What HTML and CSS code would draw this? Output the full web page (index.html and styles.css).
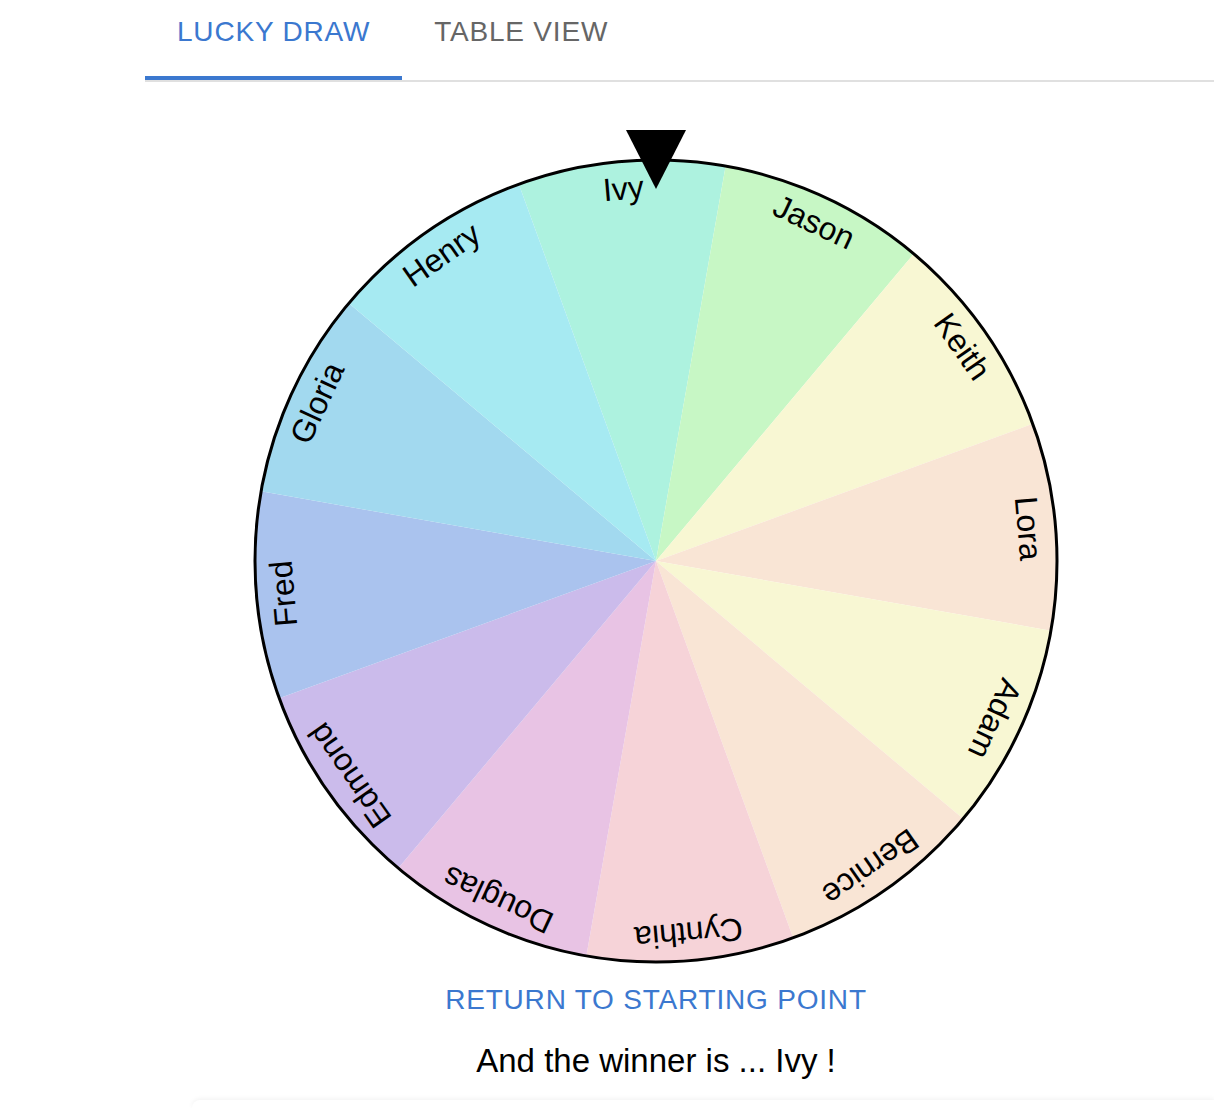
FILE: index.html
```html
<!DOCTYPE html>
<html lang="en">
<head>
<meta charset="utf-8">
<title>Lucky Draw</title>
<link rel="stylesheet" href="styles.css">
</head>
<body>
<div class="page">
  <nav class="tabs">
    <button class="tab active">LUCKY DRAW</button>
    <button class="tab">TABLE VIEW</button>
  </nav>
  <main class="content">
    <svg class="wheel" width="820" height="836" viewBox="0 0 820 836">
      <g class="slices">
        <path d="M410,431 L272.85,54.18 A401,401 0 0 1 479.63,36.09 Z" fill="#adf2df"/>
        <path d="M410,431 L479.63,36.09 A401,401 0 0 1 667.76,123.82 Z" fill="#c7f7c5"/>
        <path d="M410,431 L667.76,123.82 A401,401 0 0 1 786.82,293.85 Z" fill="#f8f7d3"/>
        <path d="M410,431 L786.82,293.85 A401,401 0 0 1 804.91,500.63 Z" fill="#f9e5d5"/>
        <path d="M410,431 L804.91,500.63 A401,401 0 0 1 717.18,688.76 Z" fill="#f8f7d3"/>
        <path d="M410,431 L717.18,688.76 A401,401 0 0 1 547.15,807.82 Z" fill="#f9e5d5"/>
        <path d="M410,431 L547.15,807.82 A401,401 0 0 1 340.37,825.91 Z" fill="#f6d3d8"/>
        <path d="M410,431 L340.37,825.91 A401,401 0 0 1 152.24,738.18 Z" fill="#e8c3e4"/>
        <path d="M410,431 L152.24,738.18 A401,401 0 0 1 33.18,568.15 Z" fill="#cbbbeb"/>
        <path d="M410,431 L33.18,568.15 A401,401 0 0 1 15.09,361.37 Z" fill="#aac3ee"/>
        <path d="M410,431 L15.09,361.37 A401,401 0 0 1 102.82,173.24 Z" fill="#a2d9ef"/>
        <path d="M410,431 L102.82,173.24 A401,401 0 0 1 272.85,54.18 Z" fill="#a6eaf2"/>
      </g>
      <g class="labels">
        <text x="410" y="68" transform="rotate(-5 410 431)">Ivy</text>
        <text x="410" y="68" transform="rotate(25 410 431)">Jason</text>
        <text x="410" y="68" transform="rotate(55 410 431)">Keith</text>
        <text x="410" y="68" transform="rotate(85 410 431)">Lora</text>
        <text x="410" y="68" transform="rotate(115 410 431)">Adam</text>
        <text x="410" y="68" transform="rotate(145 410 431)">Bernice</text>
        <text x="410" y="68" transform="rotate(175 410 431)">Cynthia</text>
        <text x="410" y="68" transform="rotate(205 410 431)">Douglas</text>
        <text x="410" y="68" transform="rotate(235 410 431)">Edmond</text>
        <text x="410" y="68" transform="rotate(265 410 431)">Fred</text>
        <text x="410" y="68" transform="rotate(295 410 431)">Gloria</text>
        <text x="410" y="68" transform="rotate(325 410 431)">Henry</text>
      </g>
      <circle cx="410" cy="431" r="401" fill="none" stroke="#000" stroke-width="3"/>
      <polygon points="380,0 440,0 410,59" fill="#000"/>
    </svg>
    <button class="return">RETURN TO STARTING POINT</button>
    <p class="winner">And the winner is ... Ivy !</p>
  </main>
  <div class="card"></div>
</div>
</body>
</html>
```
FILE: styles.css
```css
html, body {
  margin: 0;
  padding: 0;
  overflow: hidden;
  background: #fff;
}

body {
  font-family: "Liberation Sans", Arial, sans-serif;
  color: #000;
}

.page {
  padding-left: 145px;
}

.tabs {
  display: flex;
  height: 80px;
  border-bottom: 2px solid #e0e0e0;
}

.tab {
  box-sizing: border-box;
  height: 80px;
  margin: 0;
  padding: 16px 32px 28px;
  border: none;
  border-bottom: 4px solid transparent;
  background: none;
  font-family: "Liberation Sans", Arial, sans-serif;
  font-size: 28px;
  line-height: 32px;
  letter-spacing: 0.8px;
  color: #666;
  cursor: pointer;
}

.tab.active {
  color: #3b78cf;
  border-bottom-color: #3b78cf;
}

.content {
  width: 1022px;
  display: flex;
  flex-direction: column;
  align-items: center;
}

.wheel {
  display: block;
  margin-top: 48px;
}

.labels text {
  font-family: "Liberation Sans", Arial, sans-serif;
  font-size: 32px;
  text-anchor: middle;
  fill: #000;
}

.return {
  margin: 18px 0 0;
  padding: 0;
  border: none;
  background: none;
  font-family: "Liberation Sans", Arial, sans-serif;
  font-size: 28px;
  line-height: 32px;
  letter-spacing: 0.8px;
  color: #3b78cf;
  cursor: pointer;
}

.winner {
  margin: 27px 0 0;
  font-size: 33px;
  line-height: 36px;
}

.card {
  margin: 21px 0 0 47px;
  height: 8px;
  border-top-left-radius: 8px;
  background: #fff;
  box-shadow: 0 -1px 5px rgba(0, 0, 0, 0.06);
}
```
